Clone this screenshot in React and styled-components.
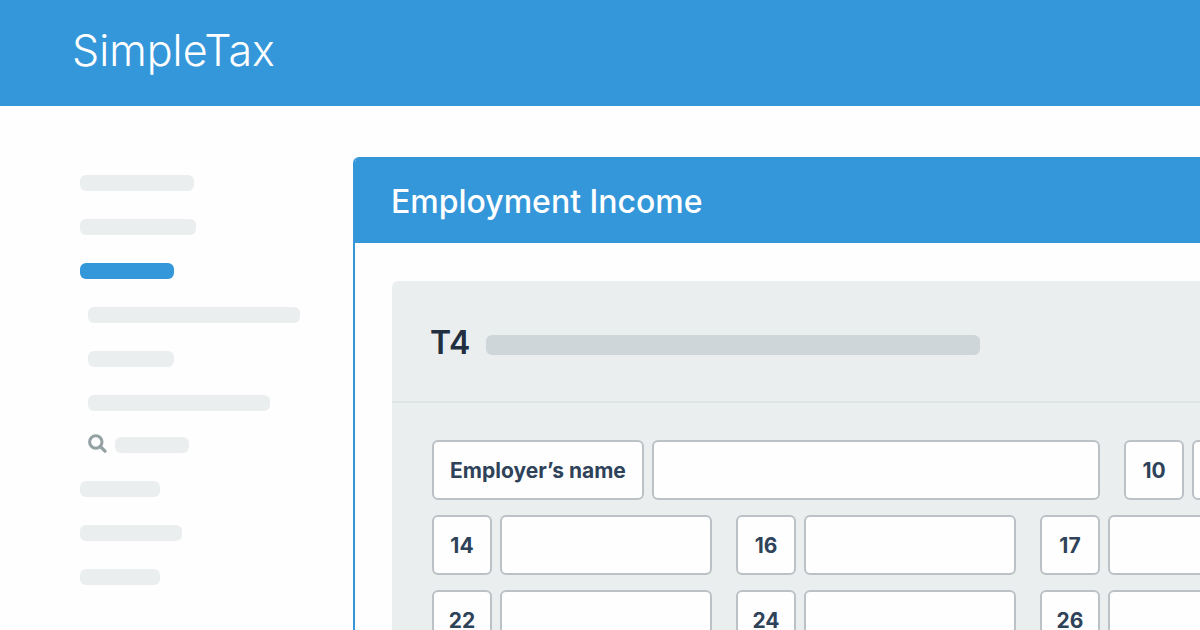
import React from "react";
import styled, { createGlobalStyle } from "styled-components";

const blue = "#3497da";

const GlobalStyle = createGlobalStyle`
  *, *::before, *::after { box-sizing: border-box; }
  body {
    margin: 0;
    background: #fefefe;
    color: #2e4259;
    font-family: Inter, "Open Sans", sans-serif;
  }
`;

const Page = styled.div`
  display: flex;
  flex-direction: column;
  height: 100vh;
  overflow: hidden;
`;

const TopBar = styled.header`
  flex: none;
  height: 106px;
  padding: 22px 72px 0;
  background: ${blue};
`;

const Logo = styled.a`
  display: inline-block;
  color: #fff;
  font-size: 43px;
  font-weight: 300;
  line-height: 56px;
  text-decoration: none;
`;

const Columns = styled.div`
  display: flex;
  flex: 1;
  min-height: 0;
`;

const Sidebar = styled.nav`
  flex: none;
  width: 353px;
  padding: 69px 50px 0 80px;
`;

const NavList = styled.ul`
  display: flex;
  flex-direction: column;
  gap: 28px;
  margin: 0;
  padding: 0;
  list-style: none;
`;

const NavItem = styled.li`
  display: flex;
  align-items: flex-end;
  gap: 8px;
  height: 16px;
  padding-left: ${(p) => (p.$nested ? 8 : 0)}px;
`;

const SearchItem = styled(NavItem)`
  height: 20px;
  margin-top: -6px;
`;

const Placeholder = styled.span`
  display: block;
  width: ${(p) => p.$width}px;
  height: ${(p) => (p.$tall ? 20 : 16)}px;
  border-radius: 6px;
  background: ${(p) => p.$color || "#ebeeef"};
`;

const Main = styled.main`
  flex: 1;
  min-width: 0;
  padding-top: 51px;
`;

const Panel = styled.section`
  min-height: 100%;
  border-left: 2px solid ${blue};
  border-top-left-radius: 6px;
  overflow: hidden;
`;

const PanelTitle = styled.h1`
  margin: 0;
  padding: 23px 36px 19px;
  background: ${blue};
  color: #fff;
  font-size: 32px;
  font-weight: 500;
  line-height: 44px;
`;

const PanelBody = styled.div`
  padding: 38px 0 0 37px;
`;

const Slip = styled.form`
  border-top-left-radius: 6px;
  background: #ebeeef;
  overflow: hidden;
`;

const SlipHeader = styled.div`
  display: flex;
  align-items: center;
  gap: 16px;
  height: 122px;
  padding: 8px 38px 0;
  border-bottom: 2px solid #dfe4e5;
`;

const SlipTitle = styled.h2`
  flex: none;
  width: 40px;
  margin: 0;
  padding-bottom: 4px;
  color: #212f41;
  font-size: 32px;
  font-weight: 600;
  line-height: 40px;
`;

const Rows = styled.div`
  display: flex;
  flex-direction: column;
  gap: 15px;
  padding: 37px 40px 40px;
`;

const Row = styled.div`
  display: flex;
  gap: 24px;
`;

const Field = styled.div`
  display: flex;
  flex: none;
  gap: 8px;
`;

const Label = styled.label`
  display: flex;
  align-items: center;
  justify-content: center;
  width: ${(p) => (p.$wide ? 212 : 60)}px;
  height: 60px;
  padding-top: 2px;
  border: 2px solid #bcc1c6;
  border-radius: 6px;
  background: #fefefe;
  font-size: 21px;
  font-weight: 700;
  line-height: 28px;
  white-space: nowrap;
`;

const Input = styled.input`
  width: ${(p) => (p.$wide ? 448 : 212)}px;
  height: 60px;
  padding: 0 16px;
  border: 2px solid #bcc1c6;
  border-radius: 6px;
  background: #fefefe;
  color: inherit;
  font: inherit;
  font-size: 21px;
`;

const SearchIcon = () => (
  <svg width="19" height="20" viewBox="0 0 19 20" fill="none" stroke="#93a1a2" aria-hidden="true">
    <circle cx="7.8" cy="9" r="6.2" strokeWidth="3" />
    <path d="M12.3 13.5 17 18.2" strokeWidth="3.2" strokeLinecap="round" />
  </svg>
);

const BoxField = ({ id, label, wide }) => (
  <Field>
    <Label htmlFor={id} $wide={wide}>{label}</Label>
    <Input id={id} type="text" $wide={wide} />
  </Field>
);

const navBefore = [
  { width: 114 },
  { width: 116 },
  { width: 94, color: blue },
  { width: 212, nested: true },
  { width: 86, nested: true },
  { width: 182, nested: true },
];
const navAfter = [{ width: 80 }, { width: 102 }, { width: 80 }];

const NavEntry = ({ width, color, nested }) => (
  <NavItem $nested={nested}>
    <Placeholder $width={width} $color={color} />
  </NavItem>
);

const slipRows = [
  [
    { id: "employer", label: "Employer’s name", wide: true },
    { id: "box10", label: "10" },
  ],
  [
    { id: "box14", label: "14" },
    { id: "box16", label: "16" },
    { id: "box17", label: "17" },
  ],
  [
    { id: "box22", label: "22" },
    { id: "box24", label: "24" },
    { id: "box26", label: "26" },
  ],
];

export default function App() {
  return (
    <Page>
      <GlobalStyle />
      <TopBar>
        <Logo href="#">SimpleTax</Logo>
      </TopBar>
      <Columns>
        <Sidebar>
          <NavList>
            {navBefore.map((item, i) => <NavEntry key={i} {...item} />)}
            <SearchItem $nested>
              <SearchIcon />
              <Placeholder $width={74} />
            </SearchItem>
            {navAfter.map((item, i) => <NavEntry key={i} {...item} />)}
          </NavList>
        </Sidebar>
        <Main>
          <Panel>
            <PanelTitle>Employment Income</PanelTitle>
            <PanelBody>
              <Slip>
                <SlipHeader>
                  <SlipTitle>T4</SlipTitle>
                  <Placeholder $width={494} $tall $color="#ced6d9" />
                </SlipHeader>
                <Rows>
                  {slipRows.map((fields, i) => (
                    <Row key={i}>
                      {fields.map((f) => <BoxField key={f.id} {...f} />)}
                    </Row>
                  ))}
                </Rows>
              </Slip>
            </PanelBody>
          </Panel>
        </Main>
      </Columns>
    </Page>
  );
}
